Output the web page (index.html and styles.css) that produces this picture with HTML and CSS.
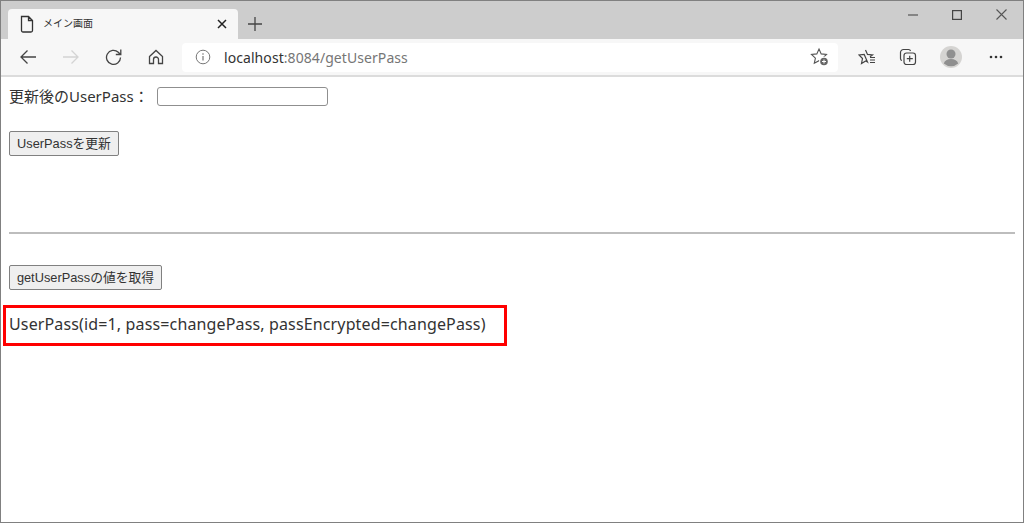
FILE: index.html
```html
<!DOCTYPE html>
<html lang="ja">
<head>
<meta charset="utf-8">
<title>メイン画面</title>
<link rel="stylesheet" href="styles.css">
</head>
<body>
<div class="window">
  <div class="titlebar">
    <div class="tab">
      <svg class="tab-icon" width="16" height="18" viewBox="0 0 16 18"><path d="M2.500 1.500h7l4 4v10a1.500 1.500 0 0 1-1.500 1.500h-8A1.500 1.500 0 0 1 2.500 15.500z M9.500 1.500v4h4" fill="none" stroke="#333" stroke-width="1.300"/></svg>
      <span class="tab-title">メイン画面</span>
      <svg class="tab-close" width="10" height="10" viewBox="0 0 10 10"><path d="M1 1l8 8M9 1l-8 8" stroke="#222" stroke-width="1.500"/></svg>
    </div>
    <svg class="new-tab" width="14" height="14" viewBox="0 0 14 14"><path d="M7 0v14M0 7h14" stroke="#444" stroke-width="1.300"/></svg>
    <div class="controls">
      <svg width="10" height="10" viewBox="0 0 10 10"><path d="M0 5h10" stroke="#555" stroke-width="1.200"/></svg>
      <svg width="10" height="10" viewBox="0 0 10 10"><rect x=".6" y=".6" width="8.800" height="8.800" fill="none" stroke="#444" stroke-width="1.200"/></svg>
      <svg width="11" height="11" viewBox="0 0 11 11"><path d="M.5.500l10 10M10.500.500l-10 10" stroke="#555" stroke-width="1.100"/></svg>
    </div>
  </div>
  <div class="toolbar">
    <div class="nav">
      <svg width="18" height="16" viewBox="0 0 18 16"><path d="M17 8H2M8.500 1.500L2 8l6.500 6.500" fill="none" stroke="#444" stroke-width="1.300"/></svg>
      <svg width="18" height="16" viewBox="0 0 18 16"><path d="M1 8h15M9.500 1.500L16 8l-6.500 6.500" fill="none" stroke="#d4d4d4" stroke-width="1.300"/></svg>
      <svg width="18" height="18" viewBox="0 0 18 18"><path d="M15.500 9.500a7 7 0 1 1-2.200-5.200L15.500 6.500M15.800 1.500v5h-5" fill="none" stroke="#444" stroke-width="1.300"/></svg>
      <svg width="16" height="16" viewBox="0 0 16 16"><path d="M1.500 7.500L8 1.500l6.500 6v7h-4v-4a2.500 2.500 0 0 0-5 0v4h-4z" fill="none" stroke="#444" stroke-width="1.300"/></svg>
    </div>
    <div class="address">
      <svg class="info" width="16" height="16" viewBox="0 0 16 16"><circle cx="8" cy="8" r="6.800" fill="none" stroke="#777" stroke-width="1"/><path d="M8 7v4.500M8 4.300v1.400" stroke="#777" stroke-width="1.200"/></svg>
      <span class="url"><span class="host">localhost</span>:8084/getUserPass</span>
      <svg class="fav" width="20" height="20" viewBox="0 0 20 20"><path d="M9 2l2.200 4.900 5.300.6-3.900 3.600 1.100 5.200L9 13.700l-4.700 2.600 1.100-5.200-3.900-3.600 5.300-.6z" fill="none" stroke="#555" stroke-width="1.100"/><circle cx="14" cy="14.500" r="5" fill="#fff"/><circle cx="14" cy="14.500" r="3.800" fill="#666"/><path d="M14 12.500v4M12 14.500h4" stroke="#fff" stroke-width="1"/></svg>
    </div>
    <div class="tools">
      <svg width="18" height="18" viewBox="0 0 18 18"><path d="M7.500 2l2 4.400 5 .6-2.500 1.800M9.500 14l-1.800-1L3.500 15.500l1-5L1 7l5.200-.6z" fill="none" stroke="#444" stroke-width="1.200"/><path d="M12 9.500h5M12 12h5M12 14.500h5" stroke="#444" stroke-width="1.100"/></svg>
      <svg width="18" height="18" viewBox="0 0 18 18"><path d="M3 12.500a2 2 0 0 1-1.500-2V4.500a3 3 0 0 1 3-3h5a2 2 0 0 1 2 1.500" fill="none" stroke="#444" stroke-width="1.200"/><rect x="5" y="5" width="11.500" height="11.500" rx="2.500" fill="none" stroke="#444" stroke-width="1.200"/><path d="M10.700 7.800v6M7.800 10.700h6" stroke="#444" stroke-width="1.200"/></svg>
      <svg class="avatar" width="22" height="22" viewBox="0 0 22 22"><circle cx="11" cy="11" r="11" fill="#d5d4d2"/><circle cx="11" cy="8" r="4.500" fill="#8f8f8f"/><path d="M3.800 17.500c.8-3 3.500-4.500 7.200-4.500s6.400 1.500 7.200 4.500a11 11 0 0 1-14.400 0z" fill="#8f8f8f"/></svg>
      <svg class="more" width="14" height="4" viewBox="0 0 14 4"><circle cx="2" cy="2" r="1.300" fill="#333"/><circle cx="7" cy="2" r="1.300" fill="#333"/><circle cx="12" cy="2" r="1.300" fill="#333"/></svg>
    </div>
  </div>
  <main class="page">
    <div class="field">
      <label class="label" for="pass">更新後のUserPass：</label>
      <input id="pass" class="input" type="text">
    </div>
    <button class="btn btn-update" type="button">UserPassを更新</button>
    <hr class="rule">
    <button class="btn btn-get" type="button">getUserPassの値を取得</button>
    <p class="result">UserPass(id=1, pass=changePass, passEncrypted=changePass)</p>
    <div class="highlight"></div>
  </main>
</div>
</body>
</html>
```
FILE: styles.css
```css
* { box-sizing: border-box; }
html, body { margin: 0; padding: 0; height: 100%; }
body { font-family: "Noto Sans", "Noto Sans CJK JP", sans-serif; color: #333; background: #fff; overflow: hidden; }
.window { width: 1024px; height: 523px; border: 1px solid #808080; display: flex; flex-direction: column; }
.titlebar { height: 38px; background: #cdcdcd; display: flex; align-items: flex-end; padding-left: 7px; flex: none; }
.tab { width: 230px; height: 30px; background: #f7f7f7; border-radius: 4px 4px 0 0; display: flex; align-items: center; padding-left: 11px; }
.tab-title { font-size: 10px; margin: 0 0 3px 8px; color: #333; flex: 1; font-family: "Noto Sans CJK JP", sans-serif; }
.tab-close { margin-right: 11px; }
.new-tab { margin: 0 0 8px 10px; }
.controls { margin-left: auto; align-self: flex-start; display: flex; align-items: center; gap: 34px; padding: 8px 16px 0 0; }
.toolbar { height: 38px; background: #f7f7f7; border-bottom: 2px solid #dcdcdc; display: flex; align-items: center; flex: none; }
.nav { display: flex; align-items: center; width: 181px; padding-left: 18px; gap: 25px; }
.address { width: 656px; height: 29px; background: #fff; border-radius: 4px; display: flex; align-items: center; padding-left: 13px; }
.url { font-size: 14px; letter-spacing: .07px; color: #767676; margin-left: 13px; flex: 1; }
.host { color: #333; }
.fav { margin-right: 8px; }
.tools { display: flex; align-items: center; margin-left: 20px; gap: 23px; }
.more { margin-left: 4px; }
.page { position: relative; flex: 1; padding: 9px 8px 0; }
.field { display: flex; align-items: center; height: 21px; font-size: 15px; }
.label { margin-bottom: 3px; }
.input { width: 171px; height: 19px; margin-left: 8px; border: 1px solid #8f8f8f; border-radius: 3px; background: #fff; }
.btn { display: block; height: 25px; padding: 0 6px 2px; font-size: 12.8px; color: #333; background: #efefef; border: 1px solid #808080; border-radius: 2px; font-family: "Liberation Sans", "Noto Sans CJK JP", sans-serif; white-space: nowrap; }
.btn-update { margin-top: 24px; width: 110px; }
.rule { margin: 76px 0 0; border: 0; border-top: 2px solid #bdbdbd; height: 2px; width: 1006px; }
.btn-get { margin-top: 31px; width: 153px; }
.result { margin: 24px 0 0; font-size: 16px; letter-spacing: .14px; line-height: 20px; }
.highlight { position: absolute; left: 2px; top: 228px; width: 504px; height: 41px; border: 3px solid #f00; }
```
